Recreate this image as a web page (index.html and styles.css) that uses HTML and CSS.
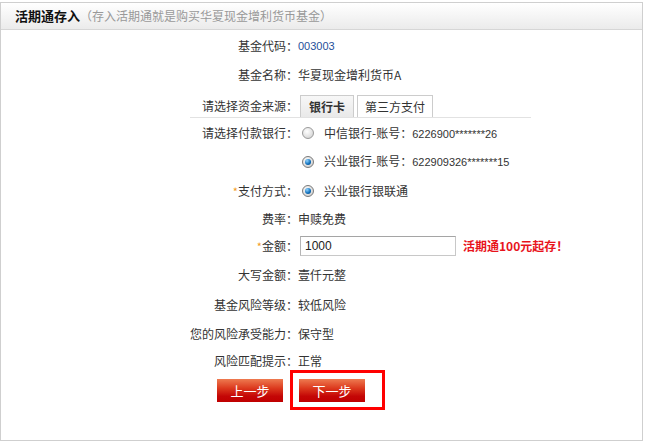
FILE: index.html
```html
<!DOCTYPE html>
<html lang="zh-CN">
<head>
<meta charset="utf-8">
<title>活期通存入</title>
<link rel="stylesheet" href="styles.css">
</head>
<body>
<div class="panel">
  <div class="panel-head">
    <span class="head-title">活期通存入</span><span class="head-note">（存入活期通就是购买华夏现金增利货币基金）</span>
  </div>
  <div class="form">
    <div class="row h28">
      <span class="label">基金代码：</span>
      <span class="value num blue">003003</span>
    </div>
    <div class="row h29">
      <span class="label">基金名称：</span>
      <span class="value">华夏现金增利货币A</span>
    </div>
    <div class="row tabs-row">
      <div class="tabline">
        <span class="label short">请选择资金来源：</span>
        <span class="tab active">银行卡</span>
        <span class="tab">第三方支付</span>
      </div>
    </div>
    <div class="row h28">
      <span class="label">请选择付款银行：</span>
      <span class="radio"></span>
      <span class="value opt">中信银行-账号：<span class="num">6226900*******26</span></span>
    </div>
    <div class="row h29">
      <span class="label"></span>
      <span class="radio checked"></span>
      <span class="value opt">兴业银行-账号：<span class="num">622909326*******15</span></span>
    </div>
    <div class="row h30">
      <span class="label"><span class="star">*</span>支付方式：</span>
      <span class="radio checked"></span>
      <span class="value opt">兴业银行银联通</span>
    </div>
    <div class="row h26">
      <span class="label">费率：</span>
      <span class="value">申赎免费</span>
    </div>
    <div class="row h28">
      <span class="label"><span class="star">*</span>金额：</span>
      <input class="amount" type="text" value="1000">
      <span class="tip">活期通100元起存！</span>
    </div>
    <div class="row h30">
      <span class="label">大写金额：</span>
      <span class="value">壹仟元整</span>
    </div>
    <div class="row h29">
      <span class="label">基金风险等级：</span>
      <span class="value">较低风险</span>
    </div>
    <div class="row h29">
      <span class="label">您的风险承受能力：</span>
      <span class="value">保守型</span>
    </div>
    <div class="row h26">
      <span class="label">风险匹配提示：</span>
      <span class="value">正常</span>
    </div>
    <div class="btn-row">
      <button class="btn" type="button">上一步</button>
      <span class="highlight"><button class="btn" type="button">下一步</button></span>
    </div>
  </div>
</div>
</body>
</html>
```

FILE: styles.css
```css
* { box-sizing: border-box; }
html, body { margin: 0; padding: 0; background: #fff; }
body {
  font-family: "Noto Sans CJK SC", "Liberation Sans", sans-serif;
  font-size: 12px;
  color: #333;
}
.panel {
  margin-top: 2px;
  width: 643px;
  height: 439px;
  border: 1px solid #cfcfcf;
  background: #fff;
}
.panel-head {
  height: 27px;
  border-bottom: 1px solid #d6d6d6;
  background: linear-gradient(#ffffff, #ebebeb);
  padding-left: 14px;
  display: flex;
  align-items: center;
  line-height: 16px;
}
.head-title {
  font-size: 13px;
  font-weight: bold;
  color: #111;
}
.head-note {
  font-size: 12px;
  color: #999;
}
.form { padding-top: 2px; }
.row {
  display: flex;
  align-items: center;
  line-height: 16px;
}
.h26 { height: 26px; }
.h28 { height: 28px; }
.h29 { height: 29px; }
.h30 { height: 30px; }
.label {
  width: 297px;
  text-align: right;
  flex: none;
}
.label.short { width: 108px; }
.star { color: #f39a1b; font-size: 11px; }
.value { white-space: nowrap; }
.num {
  font-family: "Liberation Sans", Arial, sans-serif;
  font-size: 11px;
}
.blue { color: #1f4f9a; }
.opt { margin-left: 10px; }
.radio {
  margin-left: 4px;
  width: 12px;
  height: 12px;
  border-radius: 50%;
  border: 1px solid #9a9a9a;
  background: radial-gradient(circle at 40% 35%, #ffffff, #d6d6d6 80%);
  flex: none;
  position: relative;
}
.radio.checked {
  border-color: #7a7a7a;
  background: radial-gradient(circle at 40% 35%, #ffffff, #cfcfcf 80%);
}
.radio.checked::after {
  content: "";
  position: absolute;
  left: 2px;
  top: 2px;
  width: 6px;
  height: 6px;
  border-radius: 50%;
  background: radial-gradient(circle at 35% 30%, #8fd3ff, #0b6bb8 60%, #07457d);
}
.tabs-row { height: 30px; display: block; }
.tabline {
  margin-left: 189px;
  width: 341px;
  height: 29px;
  border-bottom: 1px solid #e2e2e2;
  padding-top: 6px;
  display: flex;
  align-items: stretch;
}
.tabline .label { align-self: center; }
.tab {
  display: flex;
  align-items: center;
  height: 22px;
  padding: 0 7px;
  border: 1px solid #cccccc;
  border-bottom: none;
  background: #fff;
  margin-left: 3px;
}
.tab.active {
  margin-left: 2px;
  padding: 0 8px;
  font-weight: bold;
  background: linear-gradient(#f7f7f7, #e9e9e9);
  color: #333;
}
.amount {
  margin: 0 0 0 2px;
  width: 156px;
  height: 20px;
  border: 1px solid #c8c8c8;
  border-top-color: #a5a5a5;
  border-left-color: #b5b5b5;
  padding: 0 4px;
  font-family: "Liberation Sans", Arial, sans-serif;
  font-size: 12px;
  color: #222;
  outline: none;
}
.tip {
  margin-left: 7px;
  color: #e8141c;
  font-weight: bold;
  white-space: nowrap;
}
.btn-row {
  margin-top: -4px;
  padding-left: 216px;
  display: flex;
  align-items: flex-start;
}
.btn {
  margin-top: 9px;
  width: 66px;
  height: 23px;
  border: none;
  padding: 0;
  color: #fff;
  font-family: "Noto Sans CJK SC", sans-serif;
  font-size: 13px;
  background: linear-gradient(#ee7a50 0%, #dc3a1e 40%, #c40606 75%, #c00000 100%);
}
.highlight {
  margin-left: 7px;
  width: 95px;
  height: 40px;
  border: 3px solid #ff0000;
  padding: 6px 0 0 6px;
  display: block;
}
.highlight .btn { margin-top: 0; }
```
